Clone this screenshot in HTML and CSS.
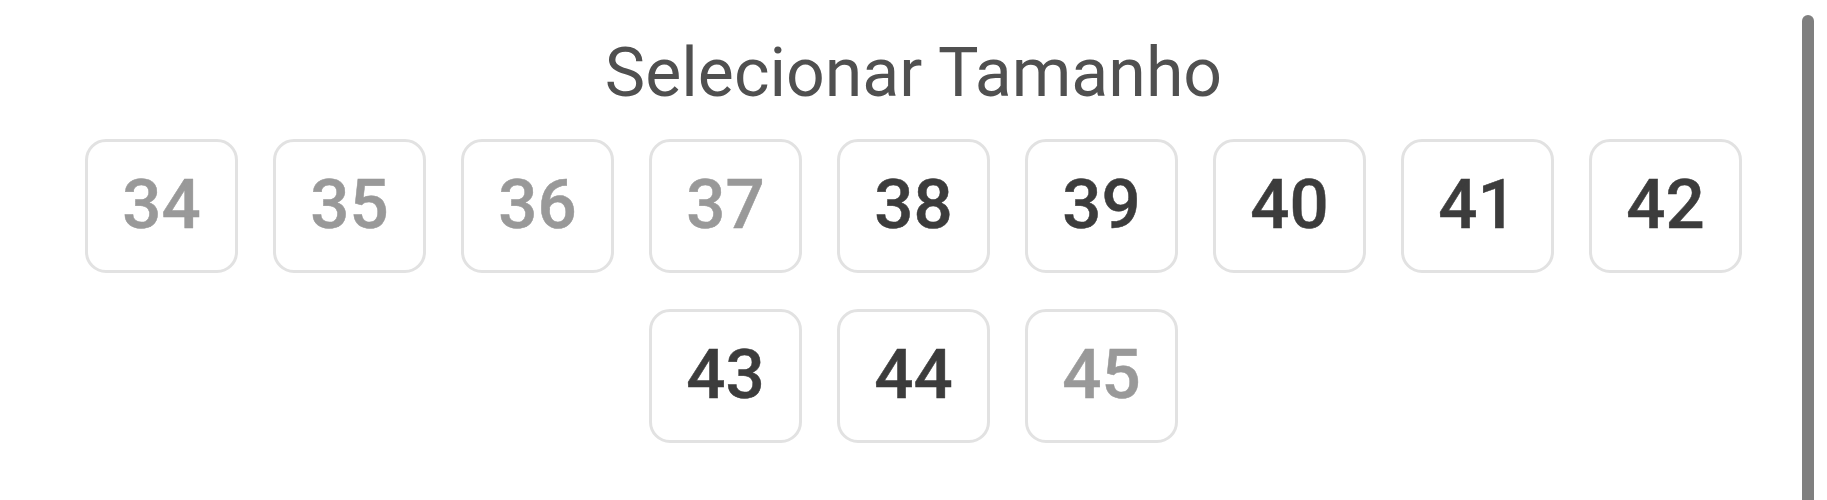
FILE: index.html
```html
<!DOCTYPE html>
<html lang="pt">
<head>
    <meta charset="UTF-8">
    <meta name="viewport" content="width=device-width, initial-scale=1.0">
    <title>Selecionar Tamanho</title>
    <link rel="stylesheet" href="styles.css">
</head>
<body>
    <div class="size-picker">
        <h2 class="title">Selecionar Tamanho</h2>
        <div class="sizes">
            <button class="size unavailable">34</button>
            <button class="size unavailable">35</button>
            <button class="size unavailable">36</button>
            <button class="size unavailable">37</button>
            <button class="size">38</button>
            <button class="size">39</button>
            <button class="size">40</button>
            <button class="size">41</button>
            <button class="size">42</button>
            <button class="size">43</button>
            <button class="size">44</button>
            <button class="size unavailable">45</button>
        </div>
    </div>
    <div class="scrollbar"></div>
</body>
</html>
```

FILE: styles.css
```css
body {
    font-family: Roboto, "Liberation Sans", sans-serif;
    margin: 0;
    background-color: #fff;
}
.size-picker {
    padding-top: 33px;
}
.title {
    margin: 0;
    text-align: center;
    font-size: 68px;
    font-weight: 400;
    line-height: 80px;
    color: #505050;
}
.sizes {
    display: flex;
    flex-wrap: wrap;
    justify-content: center;
    gap: 36px 35px;
    width: 1657px;
    margin: 26px auto 0;
}
.size {
    display: flex;
    align-items: center;
    justify-content: center;
    box-sizing: border-box;
    width: 153px;
    height: 134px;
    padding: 0 0 3px;
    background: #fff;
    border: 3px solid #e2e2e2;
    border-radius: 21px;
    font-family: Roboto, "Liberation Sans", sans-serif;
    font-size: 69px;
    font-weight: 500;
    -webkit-text-stroke: 0.5px currentColor;
    color: #3c3c3c;
    cursor: pointer;
}
.size.unavailable {
    color: #999;
}
.scrollbar {
    position: absolute;
    top: 15px;
    right: 13px;
    bottom: 0;
    width: 12px;
    background-color: #7f7f7f;
    border-radius: 6px 6px 0 0;
}
```
